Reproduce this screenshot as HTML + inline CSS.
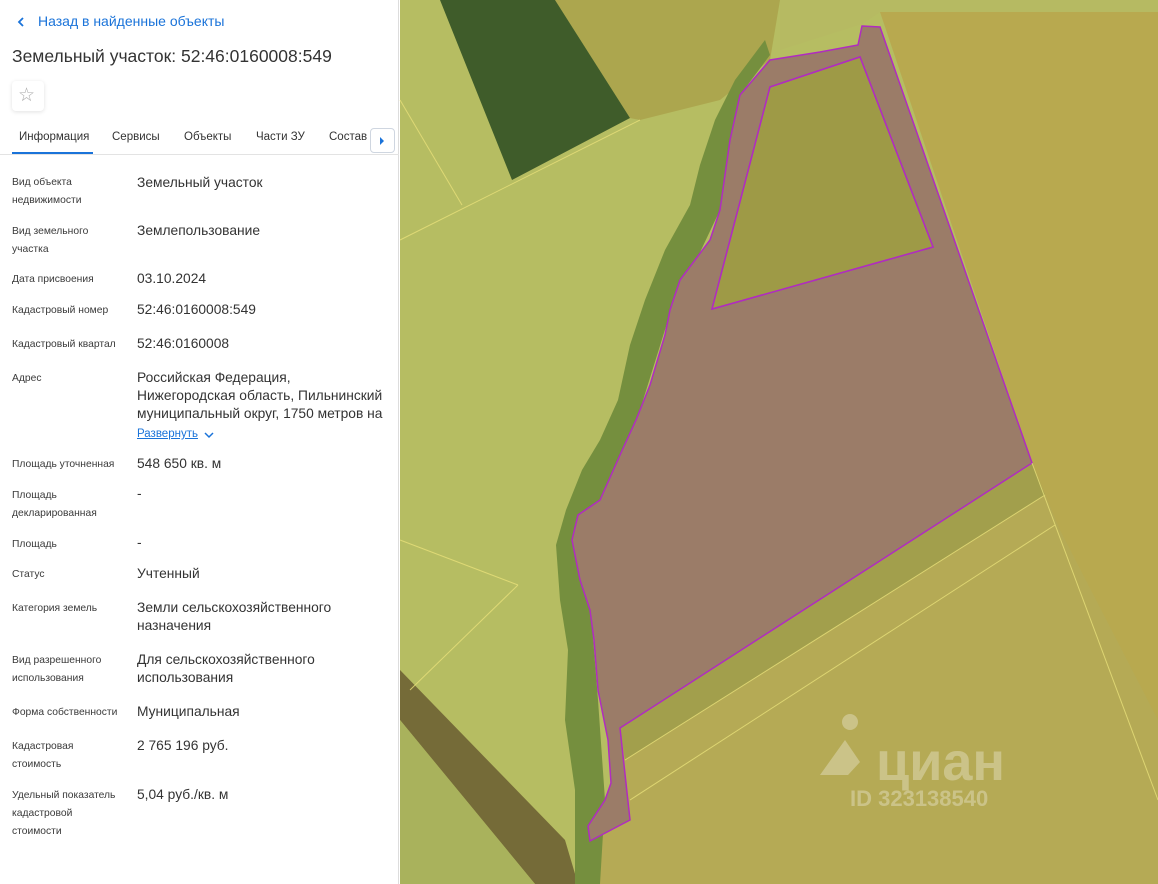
<!DOCTYPE html>
<html><head><meta charset="utf-8"><style>
*{margin:0;padding:0;box-sizing:border-box}
body{width:1158px;height:884px;overflow:hidden;position:relative;font-family:"Liberation Sans",sans-serif;background:#fff;color:#333}
.l{position:absolute;left:12px;font-size:10.3px;line-height:18px;color:#3a3a3a;width:118px}
.v{position:absolute;left:137px;font-size:13.8px;line-height:18px;color:#333;width:258px}
.tab{position:absolute;top:131px;font-size:11.5px;color:#333}
</style></head><body>
<div style="position:absolute;left:0;top:0;width:399px;height:884px;background:#fff;border-right:1px solid #ddd"></div>
<svg style="position:absolute;left:15px;top:15px" width="12" height="14"><path d="M8 3 L4 7 L8 11" stroke="#1a73d9" stroke-width="1.8" fill="none"/></svg>
<div style="position:absolute;left:38px;top:13px;font-size:14px;color:#1a73d9">Назад в найденные объекты</div>
<div style="position:absolute;left:12px;top:46px;font-size:17.5px;color:#333">Земельный участок: 52:46:0160008:549</div>
<div style="position:absolute;left:12px;top:81px;width:32px;height:30px;border-radius:4px;box-shadow:0 1px 4px rgba(0,0,0,.12);background:#fff"></div>
<div style="position:absolute;left:18px;top:84px;font-size:19px;color:#aaa">☆</div>
<div class="tab" style="left:19px">Информация</div>
<div class="tab" style="left:112px">Сервисы</div>
<div class="tab" style="left:184px">Объекты</div>
<div class="tab" style="left:256px">Части ЗУ</div>
<div class="tab" style="left:329px">Состав</div>
<div style="position:absolute;left:370px;top:128px;width:25px;height:25px;border:1px solid #cfd6e0;border-radius:4px;background:#fff"></div>
<svg style="position:absolute;left:378px;top:136px" width="8" height="10"><path d="M2 1 L6 5 L2 9Z" fill="#1a73d9"/></svg>
<div style="position:absolute;left:12px;top:152px;width:81px;height:2px;background:#1a73d9"></div>
<div style="position:absolute;left:0;top:154px;width:399px;height:1px;background:#e3e3e3"></div>

<div class="l" style="top:174px">Вид объекта<br>недвижимости</div><div class="v" style="top:174px">Земельный участок</div>
<div class="l" style="top:223px">Вид земельного<br>участка</div><div class="v" style="top:222px">Землепользование</div>
<div class="l" style="top:271px">Дата присвоения</div><div class="v" style="top:270px">03.10.2024</div>
<div class="l" style="top:302px">Кадастровый номер</div><div class="v" style="top:301px">52:46:0160008:549</div>
<div class="l" style="top:336px">Кадастровый квартал</div><div class="v" style="top:335px">52:46:0160008</div>
<div class="l" style="top:370px">Адрес</div><div class="v" style="top:369px">Российская Федерация,<br>Нижегородская область, Пильнинский<br>муниципальный округ, 1750 метров на</div>
<div style="position:absolute;left:137px;top:428px;font-size:11.5px;color:#1a73d9;text-decoration:underline">Развернуть</div>
<svg style="position:absolute;left:204px;top:431px" width="10" height="8"><path d="M1 2 L5 6 L9 2" stroke="#1a73d9" stroke-width="1.5" fill="none"/></svg>
<div class="l" style="top:456px">Площадь уточненная</div><div class="v" style="top:455px">548 650 кв. м</div>
<div class="l" style="top:487px">Площадь<br>декларированная</div><div class="v" style="top:485px">-</div>
<div class="l" style="top:536px">Площадь</div><div class="v" style="top:534px">-</div>
<div class="l" style="top:566px">Статус</div><div class="v" style="top:565px">Учтенный</div>
<div class="l" style="top:600px">Категория земель</div><div class="v" style="top:599px">Земли сельскохозяйственного<br>назначения</div>
<div class="l" style="top:652px">Вид разрешенного<br>использования</div><div class="v" style="top:651px">Для сельскохозяйственного<br>использования</div>
<div class="l" style="top:704px">Форма собственности</div><div class="v" style="top:703px">Муниципальная</div>
<div class="l" style="top:738px">Кадастровая<br>стоимость</div><div class="v" style="top:737px">2 765 196 руб.</div>
<div class="l" style="top:787px">Удельный показатель<br>кадастровой<br>стоимости</div><div class="v" style="top:786px">5,04 руб./кв. м</div>

<svg style="position:absolute;left:0;top:0" width="1158" height="884">
<rect x="400" y="0" width="758" height="884" fill="#b6bd62"/>
<!-- right fields -->
<polygon points="880,12 1158,12 1158,884 1050,884 1032,463" fill="#b8a94f"/>
<polygon points="620,728 1032,463 1060,530 1158,720 1158,884 590,884 590,841 630,820" fill="#b5aa55"/>
<polygon points="620,728 1032,463 1045,495 625,760" fill="#a29f4c"/>
<!-- top fields -->
<polygon points="555,0 780,0 770,60 720,100 640,120 630,118" fill="#aca64e"/>
<polygon points="780,0 1158,0 1158,12 880,12 862,24 780,50" fill="#b6ba62"/>
<!-- forest -->
<polygon points="440,0 555,0 630,118 512,180" fill="#3f5c2a"/>
<!-- dark strip bottom-left -->
<polygon points="400,670 400,720 535,884 578,884 565,840" fill="#756b38"/>
<polygon points="400,720 400,884 535,884" fill="#a9b25c"/>
<!-- vegetation strip -->
<path d="M765,40 L735,80 L715,120 L700,165 L690,205 L665,250 L645,300 L630,345 L618,400 L600,440 L582,470 L566,510 L556,545 L560,600 L568,650 L565,720 L575,790 L575,884 L600,884 L605,800 L598,700 L590,600 L572,540 L600,500 L640,410 L668,320 L720,210 L740,95 L770,55 Z" fill="#758f3e"/>
<!-- parcel -->
<path fill-rule="evenodd" d="M862,26 L880,27 L1032,463 L620,728 L630,820 L590,841 L588,826 L605,800 L611,783 L608,740 L598,690 L594,640 L590,610 L580,580 L572,540 L578,515 L600,500 L620,455 L636,420 L650,385 L665,335 L670,310 L680,280 L710,240 L720,210 L730,140 L740,95 L770,60 L820,52 L858,45 Z M770,87 L860,57 L933,247 L712,309 Z" fill="#9b7c68" stroke="#b02cc0" stroke-width="1.5"/>
<polygon points="770,87 860,57 933,247 712,309" fill="#9e9a46" stroke="#b02cc0" stroke-width="1.5"/>
<!-- field lines -->
<g stroke="#e8e07a" stroke-width="1" fill="none" opacity=".8">
<line x1="400" y1="240" x2="640" y2="120"/>
<line x1="400" y1="100" x2="462" y2="205"/>
<line x1="400" y1="540" x2="518" y2="585"/>
<line x1="518" y1="585" x2="410" y2="690"/>
<line x1="625" y1="760" x2="1045" y2="495"/>
<line x1="630" y1="800" x2="1055" y2="525"/>
<line x1="1032" y1="463" x2="1158" y2="800"/>
</g>
<g opacity=".3" fill="#fff">
<text x="876" y="780" font-family="Liberation Sans,sans-serif" font-size="54" font-weight="bold">циан</text>
<text x="850" y="806" font-family="Liberation Sans,sans-serif" font-size="22" font-weight="bold">ID 323138540</text>
<circle cx="850" cy="722" r="8"/>
<path d="M820,775 L845,740 L860,762 L848,775Z"/>
</g>
</svg>
</body></html>
